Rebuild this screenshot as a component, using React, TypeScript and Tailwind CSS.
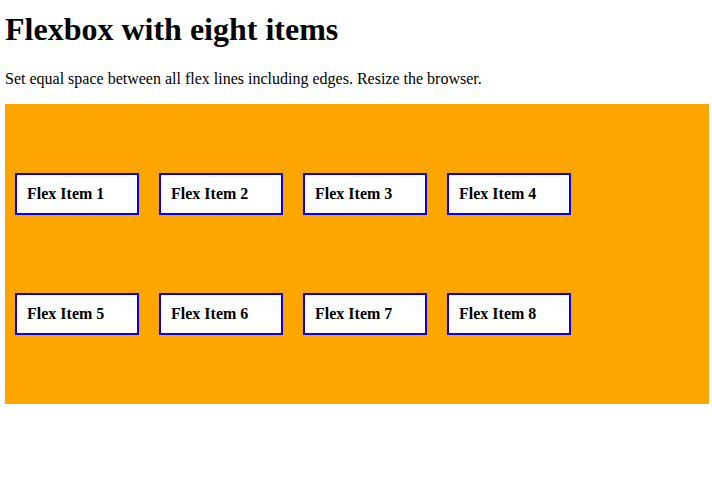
const items = [1, 2, 3, 4, 5, 6, 7, 8];

export default function App() {
  return (
    <div className="min-h-[491px] bg-white pl-[5px] pt-[11px] font-['Liberation_Serif','Times_New_Roman',serif] text-black">
      <h1 className="m-0 text-[32px] font-bold leading-[37px]">Flexbox with eight items</h1>
      <p className="mt-[22px] mb-[16px] text-[16px] leading-[18px]">
        Set equal space between all flex lines including edges. Resize the browser.
      </p>
      <div className="flex h-[300px] w-[704px] flex-wrap content-evenly bg-[#ffa500]">
        {items.map((n) => (
          <div
            key={n}
            className="m-[10px] w-[124px] border-2 border-[#0000ff] bg-white p-[10px] text-[16px] font-bold leading-[18px]"
          >
            Flex Item {n}
          </div>
        ))}
      </div>
    </div>
  );
}
